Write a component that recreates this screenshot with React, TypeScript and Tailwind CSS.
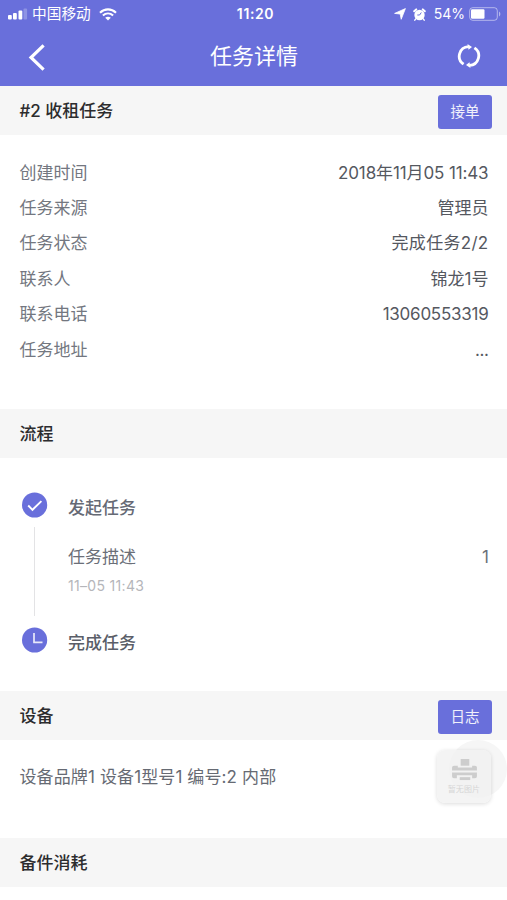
import React from "react";

const info = [
  { label: "创建时间", value: "2018年11月05 11:43", cls: "tracking-[-0.12px]" },
  { label: "任务来源", value: "管理员", cls: "" },
  { label: "任务状态", value: "完成任务2/2", cls: "tracking-[0.3px]" },
  { label: "联系人", value: "锦龙1号", cls: "" },
  { label: "联系电话", value: "13060553319", cls: "tracking-[-0.25px]" },
  { label: "任务地址", value: "...", cls: "tracking-[-0.4px]" },
];

function StatusBar() {
  return (
    <div className="grid h-7 grid-cols-3 items-center text-white">
      <div className="flex items-center pl-2">
        <svg width="20" height="12" viewBox="0 0 20 12" fill="#fff">
          <rect x="0" y="7" width="3.8" height="4.5" rx="1" />
          <rect x="5" y="5" width="3.8" height="6.5" rx="1" />
          <rect x="10.5" y="2.5" width="3.8" height="9" rx="1" />
          <rect x="15.5" y="0.5" width="3.6" height="11" rx="1" opacity="0.25" />
        </svg>
        <span className="ml-1 text-[14.7px] leading-7 whitespace-nowrap">中国移动</span>
        <svg className="ml-2 shrink-0" width="18" height="13" viewBox="0 0 18 13" fill="none" stroke="#fff" strokeWidth="2.1">
          <path d="M1 4.7C5.6.3 12.4.3 17 4.7M3.9 7.6c3-2.8 7.2-2.8 10.2 0" />
          <path d="M6.2 9.7c1.6-1.4 4-1.4 5.6 0L9 12.5z" fill="#fff" stroke="none" />
        </svg>
      </div>
      <div className="pl-1 text-center text-[14px] leading-7 font-semibold tracking-[0.6px]">11:20</div>
      <div className="flex items-center justify-end pr-[6px]">
        <svg width="12" height="12" viewBox="0 0 12 12" fill="#fff" stroke="#fff" strokeWidth="0.8" strokeLinejoin="round">
          <path d="M11.4.6 7.2 11.3 6.2 6 .6 5.4z" />
        </svg>
        <svg className="ml-[7px]" width="13" height="13" viewBox="0 0 13 13" fill="none">
          <circle cx="6.5" cy="7" r="5.2" fill="#fff" />
          <path d="M1.2 3.3 3.2 1.4M11.8 3.3 9.8 1.4" stroke="#fff" strokeWidth="2" strokeLinecap="round" />
          <path d="m2.8 10.8-1 1.4M10.2 10.8l1 1.4" stroke="#fff" strokeWidth="1.4" strokeLinecap="round" />
          <path d="M4.3 7h2.3l1.7-2.5" stroke="#696fdb" strokeWidth="1" />
        </svg>
        <span className="ml-2 text-[14px] leading-7">54%</span>
        <svg className="ml-1" width="32" height="14" viewBox="0 0 32 14" fill="none">
          <rect x="0.7" y="0.7" width="27.6" height="12.6" rx="3" stroke="#fff" strokeOpacity="0.5" />
          <rect x="2" y="2.2" width="13.5" height="9.6" rx="1.2" fill="#fff" />
          <path d="M30 4.5c1.8.8 1.8 4.2 0 5z" fill="#fff" fillOpacity="0.5" />
        </svg>
      </div>
    </div>
  );
}

function NavBar() {
  return (
    <div className="flex h-[58px] items-center justify-between pr-[26px] pl-7 text-white">
      <svg width="18" height="28" viewBox="0 0 18 28" fill="none" stroke="#fff" strokeWidth="3.2">
        <path d="M15.6 2.3 3 14.5l12.6 12.2" />
      </svg>
      <h1 className="pb-[2px] pl-[5px] text-[22px] leading-[56px] font-normal">任务详情</h1>
      <svg className="-mt-[3px]" width="24" height="24" viewBox="0 0 24 24" fill="none" stroke="#fff" strokeWidth="2.8">
        <path d="M6.6 20.2A9.6 9.6 0 0 1 11.5 2.6M17.4 3.8a9.6 9.6 0 0 1-4.9 17.6" />
        <path d="M10.5 0 15 2.9l-3.5 2.9zM13.5 24 9 21.1l3.5-2.9z" fill="#fff" stroke="none" />
      </svg>
    </div>
  );
}

function SectionHeader({ title, action }: { title: string; action?: string }) {
  return (
    <div className="flex h-[49px] items-center justify-between bg-[#f6f6f6] pr-[15px] pl-[19.5px]">
      <h2 className="pt-[2px] text-[17px] leading-[49px] font-medium text-[#2c2c2e]">{title}</h2>
      {action && (
        <button className="mt-[3px] h-[34px] w-[54px] rounded-[3px] bg-[#696fdb] text-[14.5px] leading-[34px] text-white/90">
          {action}
        </button>
      )}
    </div>
  );
}

function PrinterButton() {
  return (
    <div className="absolute top-0 right-0 h-[66px] w-[72px]">
      <div className="absolute top-0 right-0 h-[58px] w-[58px] rounded-full bg-[#f6f6f6]" />
      <div className="absolute top-[10px] left-[2px] flex h-[53px] w-[54px] flex-col items-center rounded-lg bg-[#f1f1f1]/80 pt-[9px] shadow-[0_1px_4px_rgba(0,0,0,0.14)]">
        <svg width="25" height="22" viewBox="0 0 26 23" fill="#cdcdcd">
          <rect x="9" y="0" width="9" height="7" />
          <path d="M2 7h4v2h15V7h3a2 2 0 0 1 2 2v3H0V9a2 2 0 0 1 2-2z" />
          <path d="M0 14h26v4a2 2 0 0 1-2 2h-3v-3H5v3H2a2 2 0 0 1-2-2z" />
          <rect x="8" y="19" width="11" height="3" />
        </svg>
        <span className="mt-[3px] text-[8px] leading-[10px] whitespace-nowrap text-[#d6d6d6]">暂无图片</span>
      </div>
    </div>
  );
}

export default function App() {
  return (
    <div className="h-[900px] w-full overflow-hidden bg-white font-['Inter','Noto_Sans_CJK_SC',sans-serif] text-[17px]">
      <header className="h-[86px] bg-[#696fdb]">
        <StatusBar />
        <NavBar />
      </header>

      <SectionHeader title="#2 收租任务" action="接单" />
      <dl className="h-[274px] pt-5 pr-[18.5px] pl-[19.5px]">
        {info.map((row) => (
          <div key={row.label} className="flex h-[35.4px] items-center justify-between pt-px leading-[35px]">
            <dt className="text-[#737780]">{row.label}</dt>
            <dd className={`text-[#55585f] ${row.cls}`}>{row.value}</dd>
          </div>
        ))}
      </dl>

      <SectionHeader title="流程" />
      <div className="flex h-[233px] pt-[34px] pr-[18px] pl-[21px]">
        <div className="flex w-[27px] flex-col items-center">
          <svg width="26" height="26" viewBox="0 0 26 26" fill="none">
            <circle cx="12.6" cy="13" r="12.6" fill="#696fdb" />
            <path d="m6.2 13.5 4.3 4.3 8.9-8.7" stroke="#fff" strokeWidth="1.9" />
          </svg>
          <div className="mt-[9px] mb-[11px] h-[89px] w-px bg-[#e3e3e5]" />
          <svg width="26" height="26" viewBox="0 0 26 26" fill="none">
            <circle cx="12.6" cy="13" r="12.6" fill="#696fdb" />
            <path d="M12 6v9.3h8.5" stroke="#fff" strokeOpacity="0.85" strokeWidth="1.7" />
          </svg>
        </div>
        <div className="ml-5 flex-1">
          <div className="pt-px leading-[30px] font-medium text-[#666a75]">发起任务</div>
          <div className="mt-[19px] flex justify-between leading-[30px] text-[#6b6f78]">
            <span>任务描述</span>
            <span>1</span>
          </div>
          <div className="mt-[4px] text-[14px] leading-[20px] tracking-[0.32px] text-[#b5b6ba]">11–05 11:43</div>
          <div className="mt-[32px] leading-[30px] font-medium text-[#5a5e68]">完成任务</div>
        </div>
      </div>

      <SectionHeader title="设备" action="日志" />
      <div className="relative h-[98px] pt-[22px] pl-[19.5px] leading-[30px] tracking-[0.12px] text-[#666a73]">
        设备品牌1 设备1型号1 编号:2 内部
        <PrinterButton />
      </div>

      <SectionHeader title="备件消耗" />
    </div>
  );
}
